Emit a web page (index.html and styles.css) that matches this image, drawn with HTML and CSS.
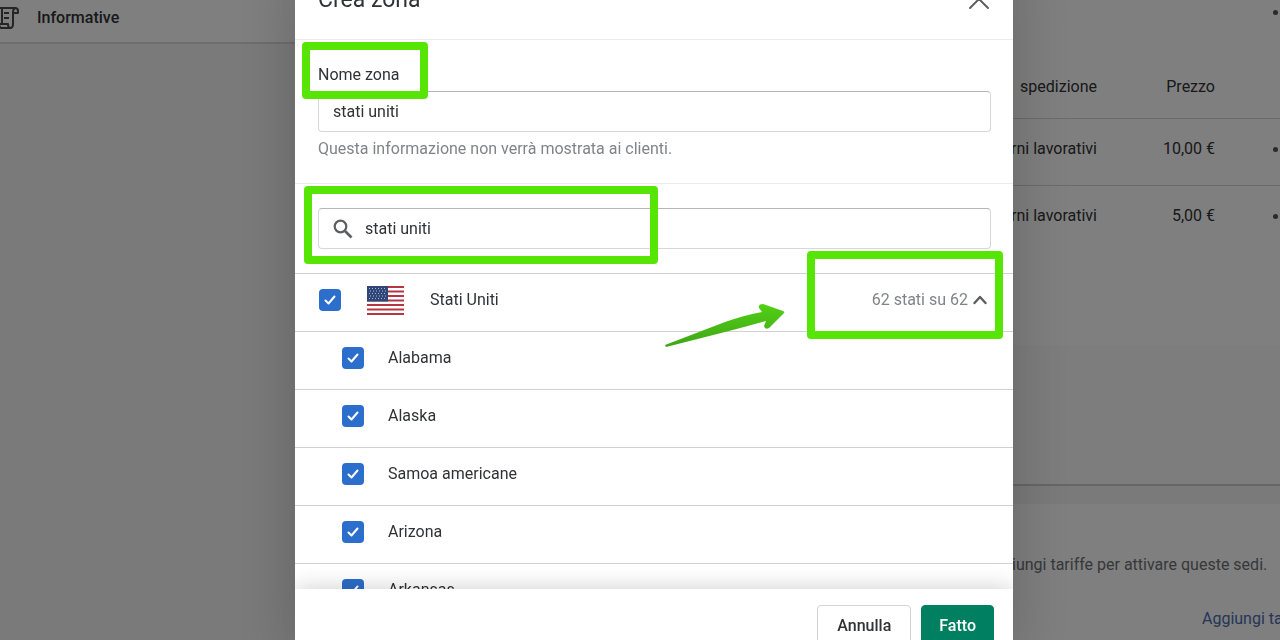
FILE: index.html
```html
<!DOCTYPE html>
<html lang="it">
<head>
    <meta charset="UTF-8">
    <meta name="viewport" content="width=device-width, initial-scale=1.0">
    <title>Crea zona</title>
    <link rel="stylesheet" href="styles.css">
</head>
<body>
    <div class="page">
        <aside class="sidebar">
            <a class="sidebar-link" href="#">
                <svg width="20" height="24" viewBox="0 0 20 24" fill="none" stroke="#4a4a4a" stroke-width="2" stroke-linejoin="round">
                    <path d="M0 2h15q3 0 3 3v2h-4M15 2q-2 1-2 4v12q0 4-3 4H1q-2-1-2-4h9q0 4 2 4M2 3v15M4 7h5M4 12h5" />
                </svg>
                <span>Informative</span>
            </a>
        </aside>

        <main class="main">
            <section class="card rates">
                <div class="rates-top">
                    <button class="more" aria-label="Altro"></button>
                </div>
                <table>
                    <thead>
                        <tr><th>spedizione</th><th>Prezzo</th><th></th></tr>
                    </thead>
                    <tbody>
                        <tr>
                            <td>rni lavorativi</td>
                            <td>10,00 €</td>
                            <td><button class="more" aria-label="Altro"></button></td>
                        </tr>
                        <tr>
                            <td>rni lavorativi</td>
                            <td>5,00 €</td>
                            <td><button class="more" aria-label="Altro"></button></td>
                        </tr>
                    </tbody>
                </table>
                <div class="rates-empty"></div>
            </section>
            <section class="card locations">
                <p>iungi tariffe per attivare queste sedi.</p>
                <a href="#">Aggiungi ta</a>
            </section>
        </main>
    </div>

    <div class="overlay">
        <div class="modal" role="dialog" aria-labelledby="titolo">
            <header class="modal-header">
                <h2 id="titolo">Crea zona</h2>
                <button class="close" aria-label="Chiudi">
                    <svg width="20" height="20" viewBox="0 0 20 20" fill="none" stroke="#5c5f62" stroke-width="2" stroke-linecap="round">
                        <path d="M1 0l18 18M19 0L1 18" />
                    </svg>
                </button>
            </header>

            <div class="section">
                <label class="field-label" for="nome">Nome zona</label>
                <input class="text-input" type="text" id="nome" value="stati uniti">
                <p class="help">Questa informazione non verrà mostrata ai clienti.</p>
            </div>

            <div class="section search">
                <svg class="search-icon" width="20" height="20" viewBox="0 0 20 20" fill="none" stroke="#5c5f62">
                    <circle cx="7.5" cy="7.5" r="5.8" stroke-width="2.2" />
                    <path d="M12 12l6.5 6.5" stroke-width="2.6" />
                </svg>
                <input class="text-input" type="text" aria-label="Cerca paesi" value="stati uniti">
            </div>

            <ul class="list">
                <li class="row country">
                    <input type="checkbox" id="us" checked>
                    <svg class="flag" width="37" height="29" viewBox="0 0 37 29">
                        <rect width="37" height="29" fill="#fff" />
                        <path d="M0 1h37M0 5.5h37M0 10h37M0 14.5h37M0 19h37M0 23.5h37M0 28h37" stroke="#b73442" stroke-width="2" />
                        <rect width="21" height="15.5" fill="#2f4678" />
                        <path d="M2 2.5h18M3 5h17M2 7.5h18M3 10h17M2 12.5h18" stroke="#a9b6d2" stroke-width="1" stroke-dasharray="1 2" />
                    </svg>
                    <label for="us">Stati Uniti</label>
                    <button class="count">
                        62 stati su 62
                        <svg width="14" height="10" viewBox="0 0 14 10" fill="none" stroke="#5c5f62" stroke-width="2.4" stroke-linecap="round" stroke-linejoin="round">
                            <path d="M1.5 8L7 2l5.500 6" />
                        </svg>
                    </button>
                </li>
                <li class="row state">
                    <input type="checkbox" id="al" checked>
                    <label for="al">Alabama</label>
                </li>
                <li class="row state">
                    <input type="checkbox" id="ak" checked>
                    <label for="ak">Alaska</label>
                </li>
                <li class="row state">
                    <input type="checkbox" id="as" checked>
                    <label for="as">Samoa americane</label>
                </li>
                <li class="row state">
                    <input type="checkbox" id="az" checked>
                    <label for="az">Arizona</label>
                </li>
                <li class="row state">
                    <input type="checkbox" id="ar" checked>
                    <label for="ar">Arkansas</label>
                </li>
            </ul>

            <footer class="modal-footer">
                <button class="btn">Annulla</button>
                <button class="btn btn-primary">Fatto</button>
            </footer>

            <!-- evidenziazioni della guida -->
            <div class="mark mark-name"></div>
            <div class="mark mark-search"></div>
            <div class="mark mark-count"></div>
            <svg class="arrow" width="120" height="44" viewBox="0 0 120 44">
                <defs>
                    <linearGradient id="verde" x1="0" y1="0" x2="0" y2="1">
                        <stop offset="0" stop-color="#52d015" />
                        <stop offset="1" stop-color="#3fa516" />
                    </linearGradient>
                </defs>
                <path d="M0 41L60 18Q80 11 97 8L94 4q-1-4 4-4l20 7q2 1 1 2l-15 15q-4 2-5-2l2-5Q80 23 60 28L1 43z" fill="url(#verde)" />
            </svg>
        </div>
    </div>
</body>
</html>
```
FILE: styles.css
```css
* {
    box-sizing: border-box;
}
body {
    margin: 0;
    height: 100vh;
    overflow: hidden;
    font-family: Roboto, "Liberation Sans", sans-serif;
    font-size: 16px;
    line-height: 20px;
    color: #303234;
    background-color: #f4f4f5;
}
button,
input {
    font: inherit;
    color: inherit;
    margin: 0;
}
button {
    border: none;
    background: none;
    padding: 0;
    cursor: pointer;
}
h2,
p,
ul {
    margin: 0;
    padding: 0;
}

/* Pagina sotto la finestra */
.page {
    display: flex;
    justify-content: space-between;
    height: 100vh;
    overflow: hidden;
}
.sidebar {
    flex: 0 1 400px;
}
.sidebar-link {
    display: flex;
    align-items: center;
    gap: 17px;
    height: 44px;
    padding-bottom: 7px;
    background-color: #fff;
    border-bottom: 2px solid #dcdcdc;
    color: #303234;
    font-weight: 500;
    text-decoration: none;
}
.main {
    flex: 0 0 272px;
    min-width: 0;
}
.card {
    background-color: #fff;
}
.rates {
    border-bottom: 2px solid #ccc;
}
.rates-top {
    display: flex;
    justify-content: flex-end;
    height: 56px;
    padding-top: 10px;
}
.more {
    display: inline-block;
    width: 5px;
    height: 5px;
    margin-right: 2px;
    border-radius: 50%;
    background-color: #505356;
    vertical-align: middle;
}
table {
    width: 100%;
    table-layout: fixed;
    border-collapse: collapse;
}
th,
td {
    height: 67px;
    padding: 20px 0 0;
    border-bottom: 1px solid #d6d6d6;
    text-align: right;
    vertical-align: top;
    font-weight: 400;
    white-space: nowrap;
}
th {
    height: 62px;
    padding-top: 21px;
}
th:first-child {
    width: 89px;
}
th:nth-child(2) {
    width: 118px;
}
tbody tr:last-child td {
    border-bottom: none;
}
.rates-empty {
    height: 139px;
    margin-top: 93px;
    background-color: #fbfbfb;
}
.locations {
    display: flex;
    flex-direction: column;
    gap: 34px;
    margin-top: 18px;
    padding: 51px 0 12px 4px;
    overflow: hidden;
    white-space: nowrap;
    color: #6d7175;
}
.locations a {
    padding-left: 190px;
    color: #4a6cae;
    text-decoration: none;
}

/* Finestra */
.overlay {
    position: fixed;
    inset: 0;
    display: flex;
    justify-content: center;
    align-items: flex-start;
    padding-left: 28px;
    overflow: hidden;
    background-color: rgba(0, 0, 0, 0.5);
}
.modal {
    position: relative;
    display: flex;
    flex-direction: column;
    width: 100%;
    max-width: 718px;
    height: calc(100vh + 62px);
    margin-top: -40px;
    background-color: #fff;
    box-shadow: 0 0 60px rgba(0, 0, 0, 0.2);
    overflow: hidden;
}
.modal-header {
    display: flex;
    justify-content: space-between;
    align-items: center;
    height: 80px;
    padding: 0 24px 0 23px;
    border-bottom: 1px solid #ececec;
}
.modal-header h2 {
    font-size: 23px;
    line-height: 28px;
    font-weight: 400;
}
.close svg {
    display: block;
}
.section {
    display: flex;
    flex-direction: column;
    gap: 6px;
    padding: 25px 22px 23px 23px;
    border-bottom: 1px solid #ececec;
}
.text-input {
    width: 100%;
    height: 41px;
    padding: 0 14px;
    border: 1px solid #d5d7d9;
    border-top-color: #b4b6b8;
    border-radius: 4px;
    background-color: #fff;
}
.help {
    line-height: 22px;
    color: #808488;
}
.search {
    position: relative;
    padding-top: 24px;
    padding-bottom: 24px;
    border-bottom: none;
}
.search .text-input {
    padding-left: 46px;
}
.search-icon {
    position: absolute;
    left: 38px;
    top: 35px;
}
.list {
    flex: 1 1 0;
    min-height: 0;
    overflow: hidden;
    list-style: none;
}
.row {
    display: flex;
    align-items: center;
    height: 58px;
    padding: 0 26px 5px 24px;
    border-top: 1px solid #cfd1d3;
}
.country {
    gap: 26px;
}
.state {
    gap: 24px;
    padding-left: 47px;
}
.row input {
    appearance: none;
    width: 22px;
    height: 22px;
    border: 1px solid #babfc3;
    border-radius: 4px;
}
.row input:checked {
    border: none;
    background: #2c6ecb url("data:image/svg+xml,%3Csvg xmlns='http://www.w3.org/2000/svg' viewBox='0 0 22 22'%3E%3Cpath d='M6.500 11.500l3 3 6-7' fill='none' stroke='white' stroke-width='2' stroke-linecap='round' stroke-linejoin='round'/%3E%3C/svg%3E");
}
.count {
    display: flex;
    align-items: center;
    gap: 5px;
    margin-left: auto;
    color: #808488;
}
.modal-footer {
    position: relative;
    display: flex;
    justify-content: flex-end;
    gap: 10px;
    padding: 16px 19px;
    background-color: #fff;
    box-shadow: 0 0 24px rgba(0, 0, 0, 0.2);
}
.btn {
    height: 41px;
    padding: 0 19px;
    border: 1px solid #d2d5d8;
    border-radius: 4px;
    background-color: #fff;
    font-weight: 500;
}
.btn-primary {
    padding: 0 17px;
    border-color: #008060;
    background-color: #008060;
    color: #fff;
}

/* Riquadri e freccia */
.mark {
    position: absolute;
    border: 8px solid #57e506;
    border-radius: 4px;
    pointer-events: none;
}
.mark-name {
    left: 7px;
    top: 82px;
    width: 126px;
    height: 57px;
}
.mark-search {
    left: 9px;
    top: 226px;
    width: 354px;
    height: 78px;
}
.mark-count {
    right: 10px;
    top: 291px;
    width: 196px;
    height: 88px;
}
.arrow {
    position: absolute;
    right: 228px;
    top: 344px;
}
```
